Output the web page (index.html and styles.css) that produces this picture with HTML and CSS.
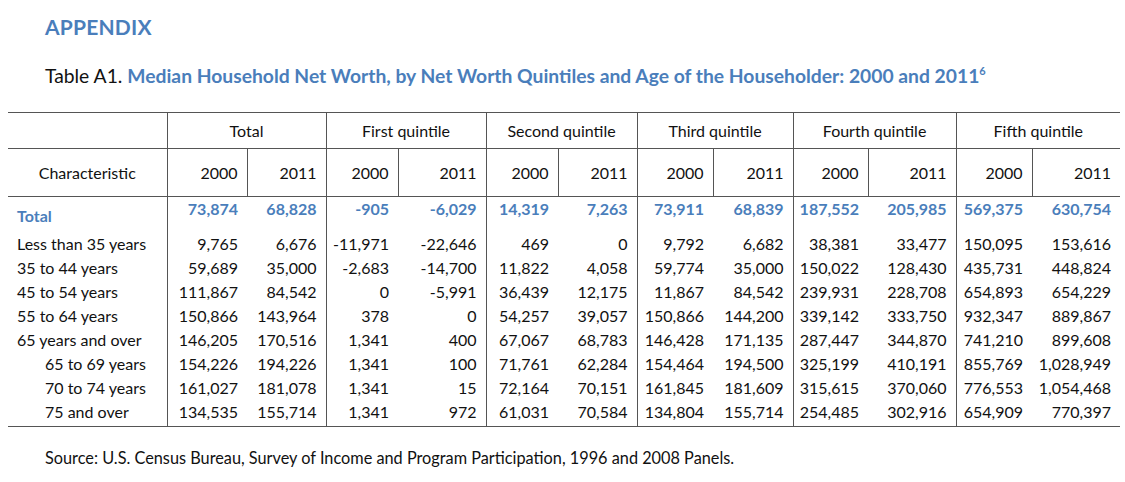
FILE: index.html
```html
<!DOCTYPE html>
<html>
<head>
<meta charset="utf-8">
<link rel="stylesheet" href="styles.css">
</head>
<body>
<div class="page">
  <h1 class="appendix">APPENDIX</h1>
  <p class="caption">Table A1. <b>Median Household Net Worth, by Net Worth Quintiles and Age of the Householder: 2000 and 2011<sup>6</sup></b></p>
  <table class="data">
    <colgroup>
      <col style="width:159px"><col style="width:80px"><col style="width:79px"><col style="width:72px"><col style="width:88px"><col style="width:72px"><col style="width:79px"><col style="width:76px"><col style="width:80px"><col style="width:75px"><col style="width:88px"><col style="width:76px"><col style="width:88px">
    </colgroup>
    <thead>
      <tr class="groups">
        <th></th>
        <th colspan="2" class="g">Total</th>
        <th colspan="2" class="g">First quintile</th>
        <th colspan="2" class="g">Second quintile</th>
        <th colspan="2" class="g">Third quintile</th>
        <th colspan="2" class="g">Fourth quintile</th>
        <th colspan="2" class="g">Fifth quintile</th>
      </tr>
      <tr class="years">
        <th class="char">Characteristic</th>
        <th class="y g">2000</th><th class="y s">2011</th>
        <th class="y g">2000</th><th class="y s">2011</th>
        <th class="y g">2000</th><th class="y s">2011</th>
        <th class="y g">2000</th><th class="y s">2011</th>
        <th class="y g">2000</th><th class="y s">2011</th>
        <th class="y g">2000</th><th class="y s">2011</th>
      </tr>
    </thead>
    <tbody>
      <tr class="total">
        <td class="lbl">Total</td>
        <td class="g">73,874</td><td>68,828</td>
        <td class="g">-905</td><td>-6,029</td>
        <td class="g">14,319</td><td>7,263</td>
        <td class="g">73,911</td><td>68,839</td>
        <td class="g">187,552</td><td>205,985</td>
        <td class="g">569,375</td><td>630,754</td>
      </tr>
      <tr>
        <td class="lbl">Less than 35 years</td>
        <td class="g">9,765</td><td>6,676</td>
        <td class="g">-11,971</td><td>-22,646</td>
        <td class="g">469</td><td>0</td>
        <td class="g">9,792</td><td>6,682</td>
        <td class="g">38,381</td><td>33,477</td>
        <td class="g">150,095</td><td>153,616</td>
      </tr>
      <tr>
        <td class="lbl">35 to 44 years</td>
        <td class="g">59,689</td><td>35,000</td>
        <td class="g">-2,683</td><td>-14,700</td>
        <td class="g">11,822</td><td>4,058</td>
        <td class="g">59,774</td><td>35,000</td>
        <td class="g">150,022</td><td>128,430</td>
        <td class="g">435,731</td><td>448,824</td>
      </tr>
      <tr>
        <td class="lbl">45 to 54 years</td>
        <td class="g">111,867</td><td>84,542</td>
        <td class="g">0</td><td>-5,991</td>
        <td class="g">36,439</td><td>12,175</td>
        <td class="g">11,867</td><td>84,542</td>
        <td class="g">239,931</td><td>228,708</td>
        <td class="g">654,893</td><td>654,229</td>
      </tr>
      <tr>
        <td class="lbl">55 to 64 years</td>
        <td class="g">150,866</td><td>143,964</td>
        <td class="g">378</td><td>0</td>
        <td class="g">54,257</td><td>39,057</td>
        <td class="g">150,866</td><td>144,200</td>
        <td class="g">339,142</td><td>333,750</td>
        <td class="g">932,347</td><td>889,867</td>
      </tr>
      <tr>
        <td class="lbl">65 years and over</td>
        <td class="g">146,205</td><td>170,516</td>
        <td class="g">1,341</td><td>400</td>
        <td class="g">67,067</td><td>68,783</td>
        <td class="g">146,428</td><td>171,135</td>
        <td class="g">287,447</td><td>344,870</td>
        <td class="g">741,210</td><td>899,608</td>
      </tr>
      <tr>
        <td class="lbl sub">65 to 69 years</td>
        <td class="g">154,226</td><td>194,226</td>
        <td class="g">1,341</td><td>100</td>
        <td class="g">71,761</td><td>62,284</td>
        <td class="g">154,464</td><td>194,500</td>
        <td class="g">325,199</td><td>410,191</td>
        <td class="g">855,769</td><td>1,028,949</td>
      </tr>
      <tr>
        <td class="lbl sub">70 to 74 years</td>
        <td class="g">161,027</td><td>181,078</td>
        <td class="g">1,341</td><td>15</td>
        <td class="g">72,164</td><td>70,151</td>
        <td class="g">161,845</td><td>181,609</td>
        <td class="g">315,615</td><td>370,060</td>
        <td class="g">776,553</td><td>1,054,468</td>
      </tr>
      <tr class="last">
        <td class="lbl sub">75 and over</td>
        <td class="g">134,535</td><td>155,714</td>
        <td class="g">1,341</td><td>972</td>
        <td class="g">61,031</td><td>70,584</td>
        <td class="g">134,804</td><td>155,714</td>
        <td class="g">254,485</td><td>302,916</td>
        <td class="g">654,909</td><td>770,397</td>
      </tr>
    </tbody>
  </table>
  <p class="source">Source: U.S. Census Bureau, Survey of Income and Program Participation, 1996 and 2008 Panels.</p>
</div>
</body>
</html>
```
FILE: styles.css
```css
html, body {
  margin: 0;
  padding: 0;
  background: #ffffff;
}
body {
  font-family: Lato, "Open Sans", "Liberation Sans", sans-serif;
  color: #111;
}
.page {
  padding: 12px 5px 0 8px;
}
.appendix {
  margin: 0 0 0 37px;
  font-size: 21px;
  font-weight: 700;
  color: #4a7ebb;
  line-height: 30px;
  letter-spacing: 0.2px;
}
.caption {
  margin: 22px 0 0 37px;
  font-size: 19.3px;
  line-height: 24px;
  color: #111;
}
.caption b {
  color: #4a7ebb;
  font-weight: 700;
}
.caption sup {
  font-size: 11px;
  line-height: 0;
  vertical-align: 8px;
}
.data {
  margin-top: 24px;
  border-collapse: collapse;
  table-layout: fixed;
  width: 1112px;
  font-size: 16px;
  border-top: 1.5px solid #555;
  border-bottom: 1.5px solid #555;
}
.data th {
  font-weight: 400;
  padding: 0;
}
.groups th {
  height: 35px;
  text-align: center;
  vertical-align: middle;
  border-bottom: 1.5px solid #555;
}
.years th {
  height: 47px;
  vertical-align: middle;
  border-bottom: 1.5px solid #555;
}
.years .char {
  text-align: center;
}
.years .y {
  text-align: right;
  padding-right: 9px;
}
.data .g {
  border-left: 1px solid #555;
}
.years .s {
  border-left: 1px solid #555;
}
.data td {
  text-align: right;
  padding: 0 9px 0 0;
  height: 24px;
  line-height: 24px;
  white-space: nowrap;
}
.data td.lbl {
  text-align: left;
  padding-left: 9px;
}
.data td.sub {
  padding-left: 37px;
}
.total td {
  height: 35px;
  color: #4a7ebb;
  font-weight: 700;
  vertical-align: top;
  line-height: 24px;
}
.data .total td.lbl {
  vertical-align: top;
  padding-top: 7px;
  height: 28px;
}
.last td {
  height: 26px;
  vertical-align: top;
}
.source {
  margin: 21px 0 0 37px;
  font-size: 16.3px;
  color: #111;
}
```
